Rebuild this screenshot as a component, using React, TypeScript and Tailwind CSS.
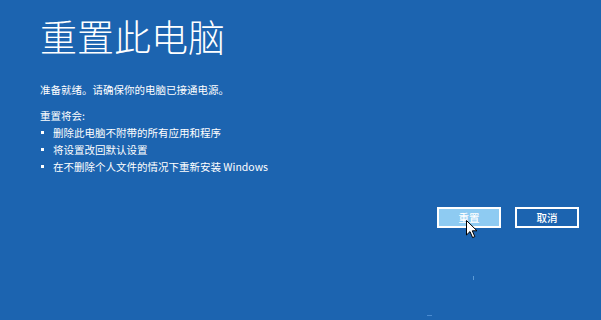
import React from "react";

const items = [
  "删除此电脑不附带的所有应用和程序",
  "将设置改回默认设置",
  "在不删除个人文件的情况下重新安装 Windows",
];

const Cursor = () => (
  <svg width="12" height="19" viewBox="0 0 12 19" className="absolute left-[27px] top-[11px]">
    <path d="M0.5 0.5 L0.5 15 L4 11.6 L6.6 17.6 L8.8 16.6 L6.3 10.8 L11 10.8 Z" fill="#fff" stroke="#000" strokeWidth="1" />
  </svg>
);

export default function App() {
  return (
    <div
      className="relative w-[601px] h-[320px] bg-[#1c64b0] text-white overflow-hidden flex flex-col"
      style={{ fontFamily: '"Noto Sans CJK SC", "Noto Sans", sans-serif' }}
    >
      <div className="pl-[40px] pt-[16px]">
        <h1 className="text-[37px] leading-[40px] font-light">重置此电脑</h1>
        <p className="mt-[27px] text-[10.5px] leading-[14px]">准备就绪。请确保你的电脑已接通电源。</p>
        <p className="mt-[12px] text-[10.5px] leading-[14px]">重置将会:</p>
        <ul className="mt-[1px] text-[10.5px] leading-[17px]">
          {items.map((t) => (
            <li key={t} className="flex items-center">
              <span className="w-[3px] h-[3px] bg-white ml-[1px] mr-[9px]" />
              <span>{t}</span>
            </li>
          ))}
        </ul>
      </div>

      {/* Buttons */}
      <div className="mt-[32px] flex justify-end gap-[14px] pr-[22px]">
        <button className="relative w-[64px] h-[21px] border-2 border-white bg-[#8ecbf2] text-[10.5px] font-medium text-white">
          重置
          <Cursor />
        </button>
        <button className="w-[64px] h-[21px] border-2 border-white text-[10.5px] font-medium text-white">
          取消
        </button>
      </div>

      <div className="absolute left-[473px] top-[276px] w-[1px] h-[4px] bg-[#5b9ad6]" />
      <div className="absolute left-[427px] top-[315px] w-[5px] h-[1px] bg-[#4a8bd0]" />
    </div>
  );
}
